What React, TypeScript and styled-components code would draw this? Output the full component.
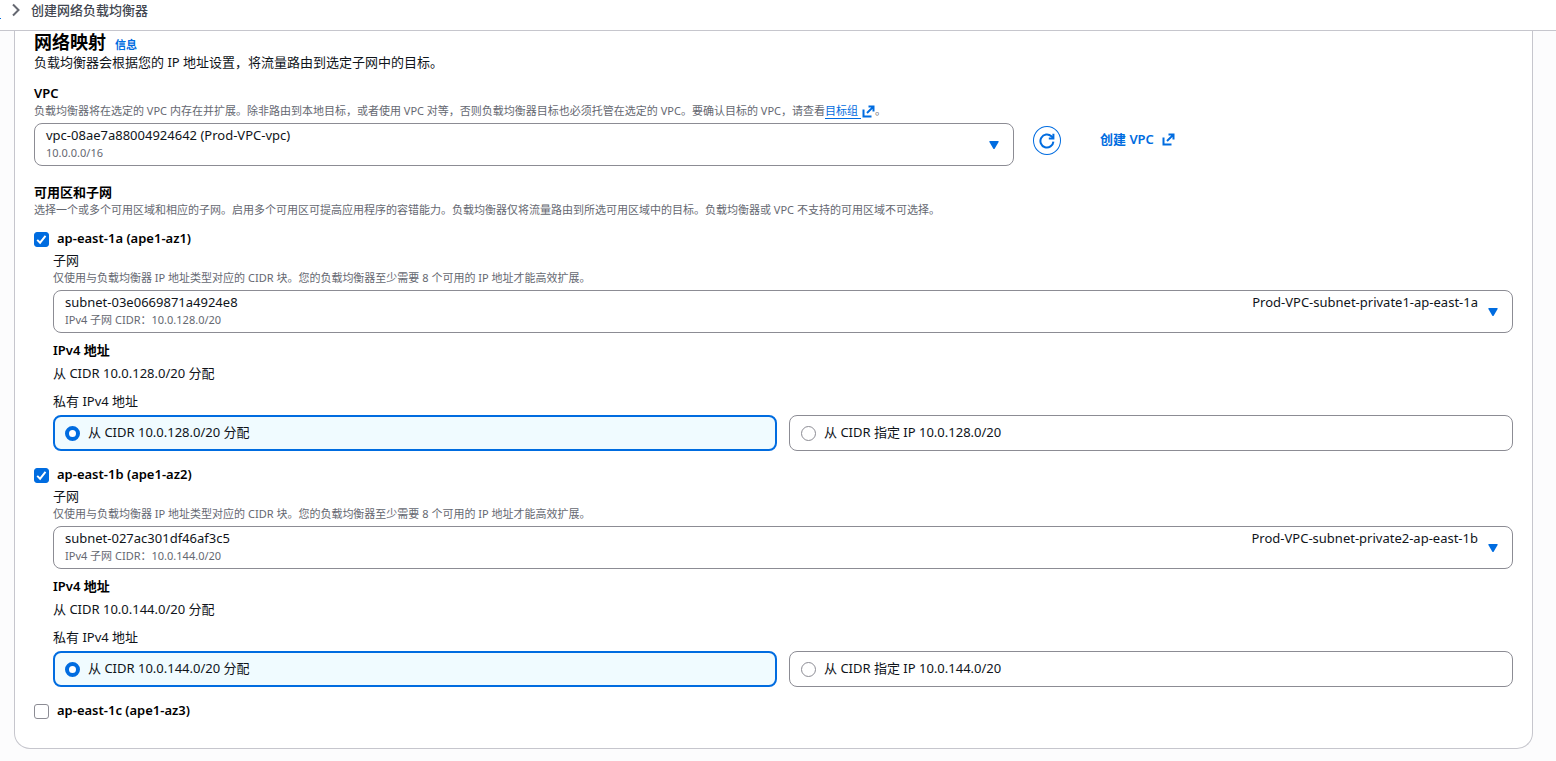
import React, { useState } from "react";
import styled, { createGlobalStyle } from "styled-components";

const color = {
  page: "#fcfcfd",
  surface: "#ffffff",
  divider: "#c6c6cd",
  control: "#8c8c94",
  text: "#0f141a",
  heading: "#000000",
  hint: "#656871",
  accent: "#006ce0",
  selected: "#f0fbff",
};

const GlobalStyle = createGlobalStyle`
  *, *::before, *::after { box-sizing: border-box; }
  body {
    margin: 0;
    background: ${color.page};
    color: ${color.text};
    font-family: "Noto Sans", "Noto Sans CJK SC", sans-serif;
    font-size: 13px;
    line-height: 18px;
  }
`;

const TopBar = styled.nav`
  display: flex;
  align-items: flex-start;
  height: 31px;
  padding: 1px 0 0;
  overflow: hidden;
  background: ${color.surface};
  border-bottom: 1px solid ${color.divider};
`;

const Crumbs = styled.ol`
  display: flex;
  align-items: center;
  margin: 0;
  padding: 0;
  list-style: none;
`;

const Crumb = styled.li`
  display: flex;
  align-items: center;
  font-weight: 500;
  color: #424650;
`;

const CrumbLink = styled.a`
  width: 1px;
  height: 17px;
  border-bottom: 1px solid ${color.accent};
`;

const Chevron = styled.svg`
  width: 16px;
  height: 16px;
  margin: 0 7px;
  fill: none;
  stroke: #656871;
  stroke-width: 2;
`;

const Panel = styled.main`
  margin: 0 23px 12px 14px;
  padding: 0 19px 28px;
  background: ${color.surface};
  border: 1px solid ${color.divider};
  border-top: 0;
  border-radius: 0 0 16px 16px;
`;

const TitleRow = styled.div`
  display: flex;
  align-items: baseline;
  gap: 9px;
`;

const Title = styled.h2`
  margin: 0;
  font-size: 18px;
  line-height: 22px;
  font-weight: 700;
  color: ${color.heading};
`;

const InfoLink = styled.a`
  font-size: 11px;
  line-height: 16px;
  font-weight: 700;
  color: ${color.accent};
  text-decoration: none;
`;

const Text = styled.p`
  margin: 0;
`;

const Section = styled.section`
  margin-top: ${(p: { $gap: number }) => p.$gap}px;
`;

const Label = styled.div<{ $strong?: boolean }>`
  margin-bottom: 1px;
  color: ${(p) => (p.$strong ? color.heading : color.text)};
  font-weight: ${(p) => (p.$strong ? 600 : 400)};
`;

const Hint = styled.div`
  font-size: 11px;
  line-height: 16px;
  color: ${color.hint};
`;

const HintLink = styled.a`
  color: ${color.accent};
  text-decoration: none;

  span {
    padding-right: 3px;
    border-bottom: 1px solid ${color.accent};
  }
`;

const ExternalSvg = styled.svg<{ $inline?: boolean }>`
  width: 13px;
  height: 13px;
  margin-left: ${(p) => (p.$inline ? 1 : 8)}px;
  vertical-align: -3px;
  fill: none;
  stroke: ${color.accent};
  stroke-width: 2;
`;

const FieldRow = styled.div`
  display: grid;
  grid-template-columns: 2fr 1fr;
  gap: 9px;
  margin-top: 4px;
`;

const Actions = styled.div`
  display: flex;
  align-items: flex-start;
  gap: 39px;
  padding: 3px 0 0 10px;
`;

const RoundButton = styled.button`
  display: grid;
  place-items: center;
  width: 28px;
  height: 29px;
  padding: 0;
  background: ${color.surface};
  border: 1px solid ${color.accent};
  border-radius: 50%;
`;

const CreateLink = styled.a`
  display: flex;
  align-items: center;
  margin-top: 4px;
  font-weight: 600;
  color: ${color.accent};
  text-decoration: none;
`;

const Picker = styled.div`
  position: relative;
  display: flex;
  align-items: center;
  gap: 10px;
  height: 43px;
  padding: 0 14px 0 11px;
  background: ${color.surface};
  border: 1px solid ${color.control};
  border-radius: 8px;
`;

const PickerSelect = styled.select`
  position: absolute;
  inset: 0;
  width: 100%;
  height: 100%;
  opacity: 0;
  cursor: pointer;
`;

const PickerValue = styled.div`
  flex: 1;
  padding-bottom: 2px;
`;

const PickerLine = styled.div`
  display: flex;
  justify-content: space-between;
  padding-bottom: 1px;
`;

const Caret = styled.svg`
  width: 10px;
  height: 8px;
  fill: ${color.accent};
`;

const Zone = styled.section`
  margin-top: ${(p: { $gap: number }) => p.$gap}px;
`;

const ZoneName = styled.label`
  display: flex;
  align-items: center;
  gap: 8px;
  height: 18px;
  font-weight: 600;
  color: ${color.heading};
`;

const OptionText = styled.span`
  padding-bottom: 2px;
`;

const CheckBox = styled.input`
  appearance: none;
  width: 15px;
  height: 15px;
  margin: 0;
  border: 1px solid ${color.control};
  border-radius: 3px;
  background: ${color.surface};

  &:checked {
    border-color: ${color.accent};
    background: ${color.accent}
      url("data:image/svg+xml,%3Csvg xmlns='http://www.w3.org/2000/svg' viewBox='0 0 13 13'%3E%3Cpath d='M2.2 6.8l2.9 2.9 5.4-6.8' fill='none' stroke='white' stroke-width='1.9'/%3E%3C/svg%3E")
      center / 13px 13px no-repeat;
  }
`;

const ZoneBody = styled.div`
  margin-left: 19px;
  padding-top: 3px;
`;

const Stack = styled.div`
  margin-top: ${(p: { $gap: number }) => p.$gap}px;
`;

const Tiles = styled.fieldset`
  display: grid;
  grid-template-columns: 1fr 1fr;
  column-gap: 12px;
  min-width: 0;
  margin: 10px 0 0;
  padding: 0;
  border: 0;
`;

const TilesLegend = styled.legend`
  padding: 0 0 5px;
`;

const Tile = styled.label<{ $on: boolean }>`
  display: flex;
  align-items: center;
  gap: 8px;
  height: 36px;
  padding: 0 ${(p) => (p.$on ? 10 : 11)}px;
  background: ${(p) => (p.$on ? color.selected : color.surface)};
  border: ${(p) => (p.$on ? `2px solid ${color.accent}` : `1px solid ${color.control}`)};
  border-radius: 8px;
`;

const Radio = styled.input`
  appearance: none;
  width: 15px;
  height: 15px;
  margin: 0;
  border: 1px solid ${color.control};
  border-radius: 50%;
  background: ${color.surface};

  &:checked {
    border: 4px solid ${color.accent};
  }
`;

function ExternalIcon({ inline }: { inline?: boolean }) {
  return (
    <ExternalSvg viewBox="0 0 13 13" $inline={inline} aria-hidden="true">
      <path d="M1.5 4.5v7h8" />
      <path d="M6.5 1.6h5v5M11.2 1.9L5 8" />
    </ExternalSvg>
  );
}

interface PickerFieldProps {
  name: string;
  value: string;
  detail: string;
  tag?: string;
}

function PickerField({ name, value, detail, tag }: PickerFieldProps) {
  return (
    <Picker>
      <PickerValue aria-hidden="true">
        <PickerLine>
          <span>{value}</span>
          {tag && <span>{tag}</span>}
        </PickerLine>
        <Hint>{detail}</Hint>
      </PickerValue>
      <Caret viewBox="0 0 10 8" aria-hidden="true">
        <path d="M1 0h8q1 0 .6 1L5.8 7.4q-.8 1-1.6 0L.4 1Q0 0 1 0z" />
      </Caret>
      <PickerSelect aria-label={name} defaultValue={value}>
        <option value={value}>{value}</option>
      </PickerSelect>
    </Picker>
  );
}

interface ZoneData {
  name: string;
  subnet?: string;
  tag?: string;
  cidr?: string;
}

const zones: ZoneData[] = [
  {
    name: "ap-east-1a (ape1-az1)",
    subnet: "subnet-03e0669871a4924e8",
    tag: "Prod-VPC-subnet-private1-ap-east-1a",
    cidr: "10.0.128.0/20",
  },
  {
    name: "ap-east-1b (ape1-az2)",
    subnet: "subnet-027ac301df46af3c5",
    tag: "Prod-VPC-subnet-private2-ap-east-1b",
    cidr: "10.0.144.0/20",
  },
  { name: "ap-east-1c (ape1-az3)" },
];

function ZoneSection({ zone, gap }: { zone: ZoneData; gap: number }) {
  const [checked, setChecked] = useState(Boolean(zone.subnet));
  const [mode, setMode] = useState("assign");
  return (
    <Zone $gap={gap}>
      <ZoneName>
        <CheckBox type="checkbox" checked={checked} onChange={() => setChecked(!checked)} />
        <OptionText>{zone.name}</OptionText>
      </ZoneName>
      {checked && zone.subnet && (
        <ZoneBody>
          <Label>子网</Label>
          <Hint>
            仅使用与负载均衡器 IP 地址类型对应的 CIDR 块。您的负载均衡器至少需要 8 个可用的 IP 地址才能高效扩展。
          </Hint>
          <Stack $gap={4}>
            <PickerField
              name="子网"
              value={zone.subnet}
              detail={`IPv4 子网 CIDR：${zone.cidr}`}
              tag={zone.tag}
            />
          </Stack>
          <Stack $gap={8}>
            <Label $strong>IPv4 地址</Label>
          </Stack>
          <Stack $gap={5}>
            <Text>从 CIDR {zone.cidr} 分配</Text>
          </Stack>
          <Tiles>
            <TilesLegend>私有 IPv4 地址</TilesLegend>
            <Tile $on={mode === "assign"}>
              <Radio
                type="radio"
                name={zone.subnet}
                checked={mode === "assign"}
                onChange={() => setMode("assign")}
              />
              <OptionText>从 CIDR {zone.cidr} 分配</OptionText>
            </Tile>
            <Tile $on={mode === "manual"}>
              <Radio
                type="radio"
                name={zone.subnet}
                checked={mode === "manual"}
                onChange={() => setMode("manual")}
              />
              <OptionText>从 CIDR 指定 IP {zone.cidr}</OptionText>
            </Tile>
          </Tiles>
        </ZoneBody>
      )}
    </Zone>
  );
}

export default function App() {
  return (
    <>
      <GlobalStyle />
      <TopBar>
        <Crumbs>
          <Crumb>
            <CrumbLink href="#" aria-label="返回" />
            <Chevron viewBox="0 0 16 16" aria-hidden="true">
              <path d="M5 2.5L10.5 8 5 13.5" />
            </Chevron>
          </Crumb>
          <Crumb>创建网络负载均衡器</Crumb>
        </Crumbs>
      </TopBar>
      <Panel>
        <TitleRow>
          <Title>网络映射</Title>
          <InfoLink href="#">信息</InfoLink>
        </TitleRow>
        <Text>负载均衡器会根据您的 IP 地址设置，将流量路由到选定子网中的目标。</Text>

        <Section $gap={13}>
          <Label $strong>VPC</Label>
          <Hint>
            负载均衡器将在选定的 VPC 内存在并扩展。除非路由到本地目标，或者使用 VPC 对等，否则负载均衡器目标也必须托管在选定的 VPC。要确认目标的
            VPC，请查看
            <HintLink href="#">
              <span>目标组</span>
              <ExternalIcon inline />
            </HintLink>
            。
          </Hint>
          <FieldRow>
            <PickerField name="VPC" value="vpc-08ae7a88004924642 (Prod-VPC-vpc)" detail="10.0.0.0/16" />
            <Actions>
              <RoundButton type="button" aria-label="刷新">
                <svg width="16" height="16" viewBox="0 0 16 16" fill="none" stroke={color.accent} strokeWidth="2" aria-hidden="true">
                  <path d="M14.4 8.6A6.5 6.5 0 1 1 12.4 3.3L14 4.8" />
                  <path d="M14.4 0.8v4.6H9.8" />
                </svg>
              </RoundButton>
              <CreateLink href="#">
                创建 VPC
                <ExternalIcon />
              </CreateLink>
            </Actions>
          </FieldRow>
        </Section>

        <Section $gap={17}>
          <Label $strong>可用区和子网</Label>
          <Hint>
            选择一个或多个可用区域和相应的子网。启用多个可用区可提高应用程序的容错能力。负载均衡器仅将流量路由到所选可用区域中的目标。负载均衡器或
            VPC 不支持的可用区域不可选择。
          </Hint>
          {zones.map((zone, i) => (
            <ZoneSection key={zone.name} zone={zone} gap={i === 0 ? 12 : 15} />
          ))}
        </Section>
      </Panel>
    </>
  );
}
